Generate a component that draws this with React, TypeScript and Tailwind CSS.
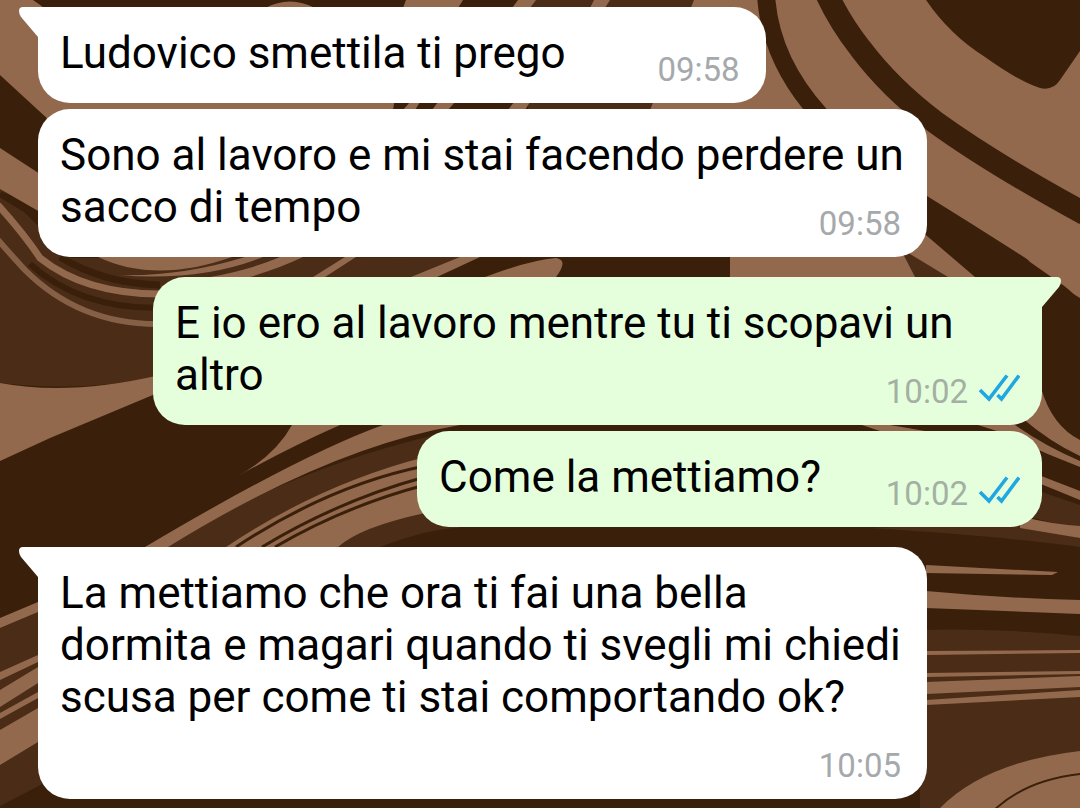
import clsx from 'clsx';

interface Message {
  id: number;
  text: string;
  time: string;
  outgoing: boolean;
  first: boolean; // first bubble of a group has the tail
}

const messages: Message[] = [
  { id: 1, text: 'Ludovico smettila ti prego', time: '09:58', outgoing: false, first: true },
  { id: 2, text: 'Sono al lavoro e mi stai facendo perdere un sacco di tempo', time: '09:58', outgoing: false, first: false },
  { id: 3, text: 'E io ero al lavoro mentre tu ti scopavi un altro', time: '10:02', outgoing: true, first: true },
  { id: 4, text: 'Come la mettiamo?', time: '10:02', outgoing: true, first: false },
  {
    id: 5,
    text: 'La mettiamo che ora ti fai una bella dormita e magari quando ti svegli mi chiedi scusa per come ti stai comportando ok?',
    time: '10:05',
    outgoing: false,
    first: true,
  },
];

function Wallpaper() {
  return (
    <svg
      className="absolute inset-0 size-full"
      viewBox="0 0 1080 808"
      preserveAspectRatio="xMidYMid slice"
      aria-hidden="true"
    >
      <rect width="1080" height="808" fill="#3a200a" />

      {/* mid brown areas */}
      <g fill="#4a2c17">
        <path d="M0 188 L70 258 L470 257 L420 277 L153 300 V378 Q80 392 0 383 Z" />
        <path d="M530 0 H700 L650 110 H528 Z" />
        <path d="M165 547 Q290 468 440 434 V515 L460 528 Q430 528 380 547 Z" />
        <path d="M0 628 L38 612 V742 L50 780 L0 806 Z" />
        <path d="M920 630 Q1000 628 1080 636 V808 H920 Z" />
        <path d="M1030 488 L1080 505 V530 L1030 517 Z" />
        <path d="M870 528 Q1000 536 1080 547 V538 L1000 522 Z" />
      </g>

      <g fill="#93694e">
        {/* top left */}
        <path d="M0 0 H33 Q60 18 100 60 L395 98 L393 110 L60 130 L38 110 L0 75 Z" />
        <path d="M265 8 Q290 -5 315 8 Z" />
        <path d="M406 0 H463 L458 8 H403 Z" />
        <path d="M518 0 H536 L530 8 H512 Z" />
        <path d="M594 0 H610 L605 8 H590 Z" />
        <path d="M410 102 H420 L415 110 H403 Z M438 102 H455 L448 110 H432 Z M514 102 H530 L525 110 H508 Z" />
        <path d="M0 148 L40 174 V212 L0 189 Z" />
        {/* right hand slab */}
        <path d="M694 0 H1080 V298 L1024 264 L1000 277 H730 V250 L650 110 Z" />
        {/* under the second bubble */}
        <path d="M98 257 Q155 284 232 257 Z" />
        <path d="M118 275 Q180 277 245 257 H263 Q200 282 118 275 Z" />
        <path d="M210 277 Q250 270 280 257 H303 Q280 268 250 277 Z" />
        <path d="M313 277 L345 257 H356 L325 277 Z M411 277 L460 257 H480 L437 277 Z" />
        <path d="M485 277 Q530 260 556 258 Q569 260 556 277 Z" />
        {/* left of the third bubble */}
        <path d="M0 383 Q70 396 160 375 V392 L50 438 L0 461 Z" />
        <path d="M236 477 Q275 456 292 425 H340 Q290 447 236 477 Z" />
        <path d="M145 547 Q300 455 383 425 H460 Q330 447 168 547 Z" />
        <path d="M226 547 Q320 484 425 457 V513 Q360 527 338 547 Z" />
        {/* left edge */}
        <path d="M0 618 L38 602 V612 L0 628 Z M0 672 L38 655 V662 L0 680 Z M0 690 L38 667 V683 L0 707 Z M0 713 L38 692 V698 L0 719 Z M0 730 L38 708 V742 L0 765 Z" />
        {/* right edge */}
        <path d="M1041 388 Q1052 426 1080 440 V456 Q1050 442 1022 418 Z" />
        <path d="M978 425 H1015 Q1045 446 1080 461 V467 Q1040 452 1000 432 Z" />
        <path d="M862 425 L890 425 L925 431 H880 Z" />
        <path d="M1036 474 L1080 491 V500 L1036 482 Z M1020 516 Q1050 524 1080 526 V538 L1020 528 Z" />
        <path d="M926 565 L1058 572 L1052 575 L926 573 Z" />
        <path d="M926 591 Q1000 598 1080 600 V614 L926 608 Z" />
        <path d="M926 651 L1080 650 V653 L926 655 Z" />
        <path d="M926 673 L1080 671 V674 L926 677 Z" />
        <path d="M926 682 L1080 676 V687 L926 694 Z M926 700 L1080 690 V697 L926 705 Z" />
        <path d="M940 808 Q985 762 1080 751 V808 Z" />
      </g>

      {/* stripes over the light parts */}
      <g fill="none" stroke="#3a200a">
        <path d="M766 -5 Q770 60 820 115" strokeWidth="18" />
        <path d="M824 -12 Q838 20 860 48 Q890 88 935 122 Q990 162 1085 214" strokeWidth="23" />
        <path d="M920 191 L927 196 Q990 235 1055 277 L1080 300 L1010 300 L975 277 L920 230 Z" fill="#3a200a" stroke="none" />
        <path d="M900 248 L915 257 L948 277 H915 Z" fill="#4a2c17" stroke="none" />
        <path d="M926 0 Q950 35 985 57 Q1020 82 1040 88 Q1053 91 1060 80 L1082 48 V0 Z" fill="#3a200a" stroke="none" />
        <path d="M236 547 Q330 485 425 466 M262 547 Q340 500 425 477 M275 547 Q345 506 425 485" strokeWidth="3" />
        <path d="M992 812 Q1025 780 1080 774" strokeWidth="2" />
        <path d="M0 194 L38 217 L60 240 M30 264 Q80 309 160 308" strokeWidth="6" />
        <path d="M60 257 Q105 284 160 285" strokeWidth="7" />
      </g>

      {/* light piece of the slab over the third stripe */}
      <path d="M1030 262 L1080 297 V230 L1000 230 Z" fill="#93694e" />

      {/* thin light lines */}
      <g fill="none" stroke="#93694e">
        <path d="M-2 205 Q25 235 40 258 Q85 294 160 294" strokeWidth="7" />
        <path d="M-2 240 Q12 256 25 270 Q80 325 160 324" strokeWidth="6" stroke="#856047" />
      </g>
    </svg>
  );
}

function Tail({ outgoing }: { outgoing: boolean }) {
  return (
    <svg
      className={clsx(
        'absolute top-0 h-8 w-6',
        outgoing ? '-right-5 -scale-x-100 text-[#e5ffdc]' : '-left-5 text-white'
      )}
      viewBox="0 0 24 32"
      fill="currentColor"
      aria-hidden="true"
    >
      <path d="M24 0 H5 Q1 0 1 4 Q1 7 3 10 L20 30 L24 32 Z" />
    </svg>
  );
}

function ReadTicks() {
  return (
    <svg
      className="h-[30px] w-[42px] shrink-0"
      viewBox="0 0 42 30"
      fill="none"
      stroke="#1fa7e1"
      strokeWidth="3.6"
      role="img"
      aria-label="Letto"
    >
      <path d="M2 18 L11 27 L29 3.5 M19.5 23 L23.5 27 L41 3.5" />
    </svg>
  );
}

function Bubble({ message }: { message: Message }) {
  const { text, time, outgoing, first } = message;

  return (
    <li
      className={clsx(
        'relative flow-root max-w-[889px] rounded-[32px] px-[22px] pt-5 pb-6',
        outgoing ? 'self-end bg-[#e5ffdc]' : 'self-start bg-white',
        outgoing && first && 'rounded-tr-none',
        !outgoing && first && 'rounded-tl-none',
        first ? 'mt-5 first:mt-0' : 'mt-1.5'
      )}
    >
      {first && <Tail outgoing={outgoing} />}
      <span className="text-[44px] leading-[52px] text-black">{text}</span>
      <span
        className={clsx(
          'float-right flex h-[52px] items-start justify-end gap-2.5 pt-[23px] text-[33px] leading-10',
          outgoing ? 'w-[199px] text-[#a3b0a3]' : 'w-[178px] pr-1 text-[#a5a9ac]'
        )}
      >
        <time>{time}</time>
        {outgoing && <ReadTicks />}
      </span>
    </li>
  );
}

export default function App() {
  return (
    <main className="relative min-h-screen overflow-hidden bg-[#3a200a] font-['Roboto',sans-serif]">
      <Wallpaper />
      <ul className="relative flex flex-col px-[38px] pt-[7px] pb-[9px]">
        {messages.map((message) => (
          <Bubble key={message.id} message={message} />
        ))}
      </ul>
    </main>
  );
}
